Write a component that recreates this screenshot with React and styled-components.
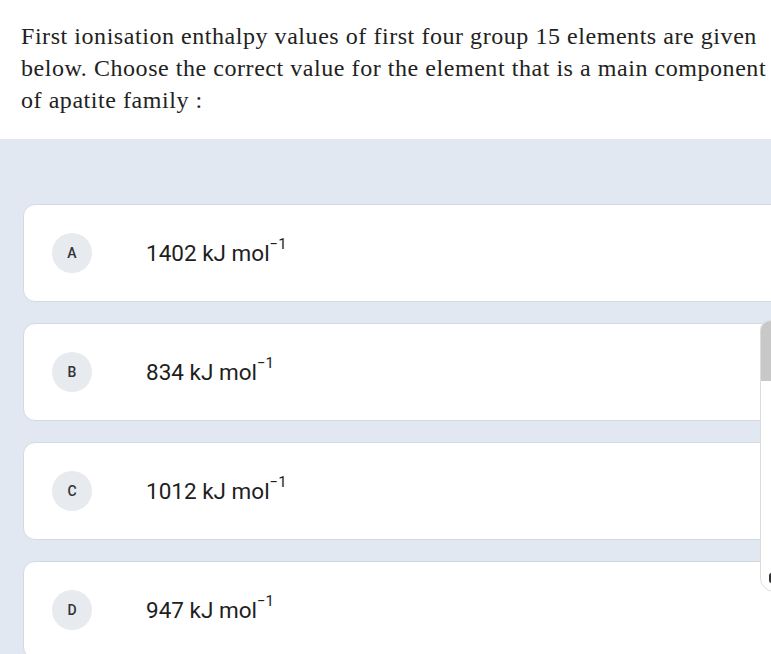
import React from 'react';
import styled, { createGlobalStyle } from 'styled-components';

const GlobalStyle = createGlobalStyle`
  html, body {
    margin: 0;
    padding: 0;
    background: #e2e8f1;
    overflow: hidden;
  }
`;

const Page = styled.div`
  width: 771px;
  height: 654px;
  overflow: hidden;
  position: relative;
  background: #e2e8f1;
`;

const QuestionBox = styled.div`
  background: #ffffff;
  height: 139px;
  box-sizing: border-box;
  padding: 20px 0 0 21px;
  width: 771px;
  overflow: hidden;
`;

const Question = styled.p`
  margin: 0;
  font-family: "Liberation Serif", "DejaVu Serif", serif;
  font-size: 24px;
  letter-spacing: 0.55px;
  line-height: 32px;
  color: #222222;
`;

const Line = styled.span`
  display: block;
  white-space: nowrap;
`;

const Options = styled.div`
  display: flex;
  flex-direction: column;
  gap: 21px;
  padding: 65px 0 0 23px;
`;

const Card = styled.div`
  width: 780px;
  height: 98px;
  box-sizing: border-box;
  background: #ffffff;
  border: 1px solid #d3d9e2;
  border-radius: 12px;
  display: flex;
  align-items: center;
  padding-left: 28px;
`;

const Badge = styled.div`
  width: 40px;
  height: 40px;
  border-radius: 50%;
  background: #e7eaee;
  display: flex;
  align-items: center;
  justify-content: center;
  font-family: Roboto, "Liberation Sans", sans-serif;
  font-size: 14px;
  font-weight: 500;
  color: #333333;
  flex-shrink: 0;
`;

const Value = styled.div`
  margin-left: 54px;
  font-family: Roboto, "Liberation Sans", sans-serif;
  font-size: 22.5px;
  color: #1e1e1e;

  sup {
    font-size: 15px;
    position: relative;
    top: -4px;
    line-height: 0;
  }
`;

const SidePanel = styled.div`
  position: absolute;
  left: 760px;
  top: 320px;
  width: 40px;
  height: 270px;
  background: #ffffff;
  border: 1px solid #dcdcdc;
  border-radius: 10px 0 0 14px;
  overflow: hidden;
`;

const SideHeader = styled.div`
  height: 60px;
  background: #c8c8c8;
`;

const SideDot = styled.div`
  position: absolute;
  left: 8px;
  top: 252px;
  width: 5px;
  height: 10px;
  border-radius: 3px;
  background: #333;
`;

const options = [
  { key: 'A', value: '1402' },
  { key: 'B', value: '834' },
  { key: 'C', value: '1012' },
  { key: 'D', value: '947' },
];

export default function App() {
  return (
    <Page>
      <GlobalStyle />
      <QuestionBox>
        <Question>
          <Line>First ionisation enthalpy values of first four group 15 elements are given</Line>
          <Line>below. Choose the correct value for the element that is a main component</Line>
          <Line>of apatite family :</Line>
        </Question>
      </QuestionBox>
      <Options>
        {options.map(o => (
          <Card key={o.key}>
            <Badge>{o.key}</Badge>
            <Value>
              {o.value} kJ mol<sup>−1</sup>
            </Value>
          </Card>
        ))}
      </Options>
      <SidePanel>
        <SideHeader />
        <SideDot />
      </SidePanel>
    </Page>
  );
}
